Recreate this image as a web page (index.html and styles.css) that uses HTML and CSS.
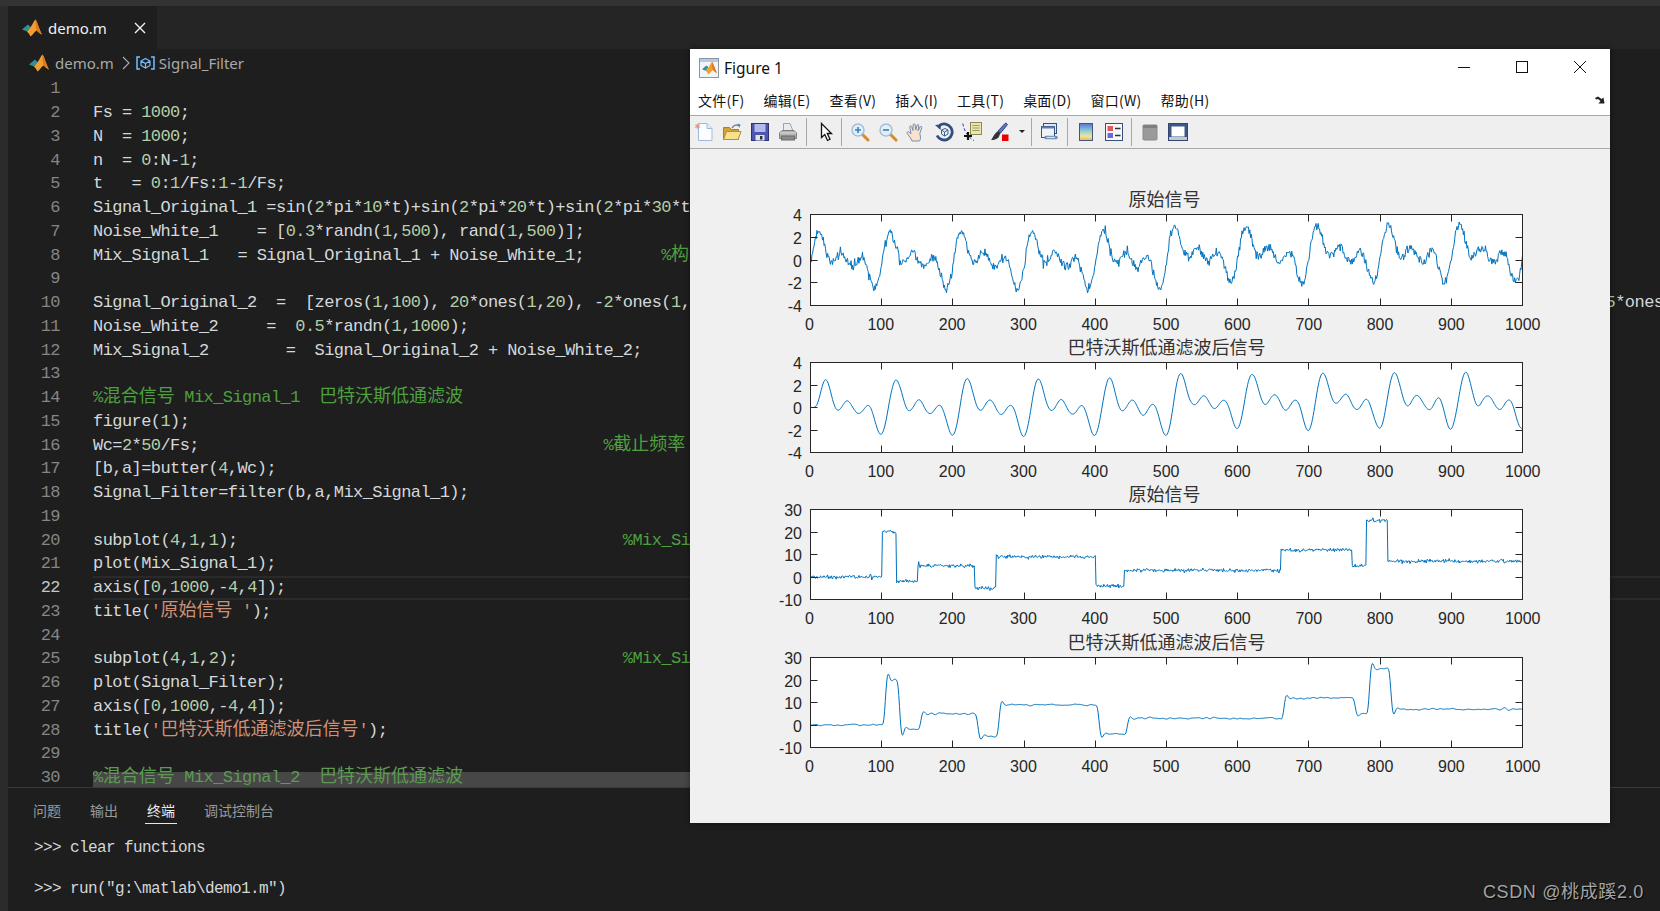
FILE: index.html
```html
<!DOCTYPE html>
<html lang="zh">
<head>
<meta charset="utf-8">
<title>demo.m</title>
<link rel="stylesheet" href="styles.css">
</head>
<body>
<svg class="defs" width="0" height="0">
  <symbol id="mlogo" viewBox="0 0 20 18">
    <path d="M0 10.5 6 5.5 8.5 8 5 12.5z" fill="#2f8f9a"/>
    <path d="M5 12.5 9 7.5C10.5 5.5 12 1.5 13.5 0.5 15 2 17.5 11 20 15.5 18 15 16 12.5 14.5 11.5 12.5 13 10.5 16 8.5 17.5 7.5 15.5 6.5 14 5 12.5z" fill="#f0a030"/>
    <path d="M13.5 .5C15 2 17.5 11 20 15.5 18 15 16 12.5 14.5 11.5 13.5 8 13.5 4 13.5 .5z" fill="#e07a1f"/>
  </symbol>
</svg>
<div class="app">
  <header class="tabbar">
    <div class="tab">
      <svg class="tab-logo" width="20" height="18"><use href="#mlogo"/></svg>
      <span class="tab-name">demo.m</span>
      <svg class="tab-close" width="12" height="12" viewBox="0 0 12 12"><path d="M1 1 11 11M11 1 1 11" stroke="#f2f2f2" stroke-width="1.4" fill="none"/></svg>
    </div>
  </header>
  <nav class="crumbs">
    <svg width="20" height="18"><use href="#mlogo"/></svg>
    <span class="crumb-file">demo.m</span>
    <svg class="crumb-chev" width="8" height="14" viewBox="0 0 8 14"><path d="M1 1 7 7 1 13" stroke="#b0b0b0" stroke-width="1.1" fill="none"/></svg>
    <svg class="crumb-sym" width="19" height="14" viewBox="0 0 19 14"><path d="M4 1H1V13H4M15 1H18V13H15" stroke="#75beff" stroke-width="1.5" fill="none"/><path d="M9.500 2.500 14 5V9.500L9.500 12 5 9.500V5zM5 5 9.500 7.500 14 5M9.500 7.500V12" stroke="#75beff" stroke-width="1.200" fill="none"/></svg>
    <span class="crumb-sig">Signal_Filter</span>
  </nav>
  <main class="editor">
    <div class="line"><span class="ln">1</span><code></code></div>
    <div class="line"><span class="ln">2</span><code>Fs = <i class="n">1000</i>;</code></div>
    <div class="line"><span class="ln">3</span><code>N  = <i class="n">1000</i>;</code></div>
    <div class="line"><span class="ln">4</span><code>n  = <i class="n">0</i>:N-<i class="n">1</i>;</code></div>
    <div class="line"><span class="ln">5</span><code>t   = <i class="n">0</i>:<i class="n">1</i>/Fs:<i class="n">1</i>-<i class="n">1</i>/Fs;</code></div>
    <div class="line"><span class="ln">6</span><code>Signal_Original_1 =sin(<i class="n">2</i>*pi*<i class="n">10</i>*t)+sin(<i class="n">2</i>*pi*<i class="n">20</i>*t)+sin(<i class="n">2</i>*pi*<i class="n">30</i>*t);</code></div>
    <div class="line"><span class="ln">7</span><code>Noise_White_1    = [<i class="n">0.3</i>*randn(<i class="n">1</i>,<i class="n">500</i>), rand(<i class="n">1</i>,<i class="n">500</i>)];</code></div>
    <div class="line"><span class="ln">8</span><code>Mix_Signal_1   = Signal_Original_1 + Noise_White_1;        <i class="c">%<b>构建混合信号</b></i></code></div>
    <div class="line"><span class="ln">9</span><code></code></div>
    <div class="line"><span class="ln">10</span><code>Signal_Original_2  =  [zeros(<i class="n">1</i>,<i class="n">100</i>), <i class="n">20</i>*ones(<i class="n">1</i>,<i class="n">20</i>), -<i class="n">2</i>*ones(<i class="n">1</i>,<i class="n">30</i>), <i class="n">5</i>*ones(<i class="n">1</i>,<i class="n">80</i>), -<i class="n">5</i>*ones(<i class="n">1</i>,<i class="n">30</i>), <i class="n">9</i>*ones(<i class="n">1</i>,<i class="n">140</i>), -<i class="n">4</i>*ones(<i class="n">1</i>,<i class="n">40</i>), <i class="n">3</i>*ones(<i class="n">1</i>,<i class="n">220</i>), <i class="n">12</i>*ones(<i class="n">1</i>,<i class="n">100</i>), <i class="n">5</i>*ones(<i class="n">1</i>,<i class="n">20</i>), <i class="n">25</i>*ones(<i class="n">1</i>,<i class="n">30</i>), <i class="n">7</i>*ones(<i class="n">1</i>,<i class="n">190</i>)];</code></div>
    <div class="line"><span class="ln">11</span><code>Noise_White_2     =  <i class="n">0.5</i>*randn(<i class="n">1</i>,<i class="n">1000</i>);</code></div>
    <div class="line"><span class="ln">12</span><code>Mix_Signal_2        =  Signal_Original_2 + Noise_White_2;</code></div>
    <div class="line"><span class="ln">13</span><code></code></div>
    <div class="line"><span class="ln">14</span><code><i class="c">%<b>混合信号</b> Mix_Signal_1  <b>巴特沃斯低通滤波</b></i></code></div>
    <div class="line"><span class="ln">15</span><code>figure(<i class="n">1</i>);</code></div>
    <div class="line"><span class="ln">16</span><code>Wc=<i class="n">2</i>*<i class="n">50</i>/Fs;                                          <i class="c">%<b>截止频率</b></i></code></div>
    <div class="line"><span class="ln">17</span><code>[b,a]=butter(<i class="n">4</i>,Wc);</code></div>
    <div class="line"><span class="ln">18</span><code>Signal_Filter=filter(b,a,Mix_Signal_1);</code></div>
    <div class="line"><span class="ln">19</span><code></code></div>
    <div class="line"><span class="ln">20</span><code>subplot(<i class="n">4</i>,<i class="n">1</i>,<i class="n">1</i>);                                        <i class="c">%Mix_Signal_1</i></code></div>
    <div class="line"><span class="ln">21</span><code>plot(Mix_Signal_1);</code></div>
    <div class="line current"><span class="ln">22</span><code>axis([<i class="n">0</i>,<i class="n">1000</i>,-<i class="n">4</i>,<i class="n">4</i>]);</code></div>
    <div class="line"><span class="ln">23</span><code>title(<i class="s">'<b>原始信号</b> '</i>);</code></div>
    <div class="line"><span class="ln">24</span><code></code></div>
    <div class="line"><span class="ln">25</span><code>subplot(<i class="n">4</i>,<i class="n">1</i>,<i class="n">2</i>);                                        <i class="c">%Mix_Signal_1</i></code></div>
    <div class="line"><span class="ln">26</span><code>plot(Signal_Filter);</code></div>
    <div class="line"><span class="ln">27</span><code>axis([<i class="n">0</i>,<i class="n">1000</i>,-<i class="n">4</i>,<i class="n">4</i>]);</code></div>
    <div class="line"><span class="ln">28</span><code>title(<i class="s">'<b>巴特沃斯低通滤波后信号</b>'</i>);</code></div>
    <div class="line"><span class="ln">29</span><code></code></div>
    <div class="line selected"><span class="ln">30</span><code><i class="c dim">%<b>混合信号</b> Mix_Signal_2  <b>巴特沃斯低通滤波</b></i></code></div>
  </main>
  <section class="panel">
    <div class="panel-tabs">
      <span class="ptab">问题</span>
      <span class="ptab">输出</span>
      <span class="ptab active">终端</span>
      <span class="ptab">调试控制台</span>
    </div>
    <div class="term">
      <div class="term-line">&gt;&gt;&gt; clear functions</div>
      <div class="term-line">&gt;&gt;&gt; run("g:\matlab\demo1.m")</div>
    </div>
  </section>
</div>

<div class="figure">
  <div class="titlebar">
    <span class="fig-icon"><svg width="15" height="14"><use href="#mlogo"/></svg></span>
    <span class="fig-title">Figure 1</span>
    <div class="win-btns">
      <span class="win-btn"><svg width="14" height="14" viewBox="0 0 14 14"><path d="M1 7.500H13" stroke="#111" fill="none"/></svg></span>
      <span class="win-btn"><svg width="14" height="14" viewBox="0 0 14 14"><rect x="1.500" y="1.500" width="11" height="11" stroke="#111" fill="none"/></svg></span>
      <span class="win-btn"><svg width="14" height="14" viewBox="0 0 14 14"><path d="M1 1 13 13M13 1 1 13" stroke="#111" fill="none"/></svg></span>
    </div>
  </div>
  <div class="menubar">
    <span>文件(F)</span><span>编辑(E)</span><span>查看(V)</span><span>插入(I)</span><span>工具(T)</span><span>桌面(D)</span><span>窗口(W)</span><span>帮助(H)</span>
    <svg class="menu-arrow" width="10" height="8" viewBox="0 0 10 8"><path d="M0 2 3 .5 6.500 3 8.500 1.500 9.500 7.500 3.500 7.500 5.500 5 3 3 1 3.500z" fill="#222"/></svg>
  </div>
  <div class="toolbar">
    <span class="tbtn"><svg viewBox="0 0 20 20"><path d="M4.500 1.500H13L18 6.500V18.500H4.500z" fill="#fbfdff" stroke="#9fbbdc"/><path d="M13 1.500V6.500H18" fill="#e2ebf6" stroke="#9fbbdc"/><path d="M3.500 1 4.300 3 6.500 2.500 5 4.200 6.500 6 4.300 5.500 3.500 7.500 2.700 5.500.5 6 2 4.200.5 2.500 2.700 3z" fill="#ef9a6a"/></svg></span>
    <span class="tbtn"><svg viewBox="0 0 20 20"><path d="M1.500 5.500H7.500L9.500 7.500H16.500V17.500H1.500z" fill="#d2a236" stroke="#a67f27"/><path d="M1.500 17.500 4.500 9.500H19L16 17.500z" fill="#f7e08e" stroke="#b58f34"/><path d="M10 6C11.500 3 15 2 17 4" stroke="#6684a8" stroke-width="1.500" fill="none"/><path d="M15.500 1.500 18.500 2.500 17.500 6z" fill="#6684a8"/></svg></span>
    <span class="tbtn"><svg viewBox="0 0 20 20"><rect x="1.500" y="1.500" width="17" height="17" fill="#4b58ac" stroke="#2b3278"/><rect x="4.500" y="2" width="11" height="8" fill="#b5baee"/><rect x="5.500" y="13" width="9" height="5.500" fill="#e3e3ee"/><rect x="10" y="14" width="2.500" height="3.500" fill="#333"/></svg></span>
    <span class="tbtn"><svg viewBox="0 0 20 20"><path d="M5.500 1.500H12L15 9H5.500z" fill="#e6edf2" stroke="#9aa4ac"/><path d="M1.500 11 4 8.500H16L18.500 11V16.500H1.500z" fill="#b3b3b3" stroke="#7d7d7d"/><path d="M2 11H18" stroke="#dcdcdc"/><rect x="3.500" y="14" width="13" height="4" fill="#8a8a8a" stroke="#6c6c6c"/></svg></span>
    <i class="sep"></i>
    <span class="tbtn"><svg viewBox="0 0 20 20"><path d="M5.500 1.500V15.500L8.800 12.500 11.500 18.500 14 17.300 11.300 11.500H15.500z" fill="#fff" stroke="#111" stroke-width="1.300"/></svg></span>
    <i class="sep sep-tight"></i>
    <span class="tbtn"><svg viewBox="0 0 20 20"><path d="M12 12 18 18" stroke="#d98b2b" stroke-width="3" stroke-linecap="round"/><circle cx="8" cy="8" r="6" fill="#dff0fb" stroke="#a7bed3" stroke-width="1.500"/><path d="M5 8H11M8 5V11" stroke="#3b7fc0" stroke-width="1.600"/></svg></span>
    <span class="tbtn"><svg viewBox="0 0 20 20"><path d="M12 12 18 18" stroke="#d98b2b" stroke-width="3" stroke-linecap="round"/><circle cx="8" cy="8" r="6" fill="#dff0fb" stroke="#a7bed3" stroke-width="1.500"/><path d="M5 8H11" stroke="#3b7fc0" stroke-width="1.600"/></svg></span>
    <span class="tbtn"><svg viewBox="0 0 20 20"><path d="M6 19C5 16 2.500 13.500 1.200 11.500 .5 10 2 9.200 3 10L5 11.800 3.800 5C3.600 3.800 5.200 3.300 5.700 4.500L7 8.500 7.200 2.800C7.300 1.500 9 1.500 9.200 2.800L9.800 8 11 3.300C11.300 2 13 2.300 12.800 3.700L12 8.800 14.200 4.800C14.800 3.800 16.300 4.500 15.800 5.700L13.800 11.500 14.500 15C14.700 17 14 18 13.500 19z" fill="#f8e3cf" stroke="#7b8db0"/></svg></span>
    <span class="tbtn"><svg viewBox="0 0 20 20"><path d="M5.500 3.500A8 8 0 1 1 3 13.500" stroke="#2f4f7f" stroke-width="2.800" fill="none"/><path d="M1 3 7 2.500 6.500 8z" fill="#2f4f7f"/><path d="M7.500 8 11 6.500 14 8V12L10.500 14 7.500 12zM7.500 8 10.500 10 14 8M10.500 10V14" fill="#e9f0f7" stroke="#3c5f90"/></svg></span>
    <span class="tbtn"><svg viewBox="0 0 20 20"><rect x="8.500" y=".5" width="11" height="12" fill="#e8e6a8" stroke="#8b8b5a"/><path d="M10.500 3.500H17.500M10.500 6H17.500M10.500 8.500H17.500" stroke="#9b9b66"/><path d="M.8 1.500C2 8 5 14.500 12 18.500" stroke="#3a3ad0" stroke-dasharray="3 2" fill="none"/><path d="M6 10V18M2 14H10" stroke="#111" stroke-width="2.200"/></svg></span>
    <span class="tbtn"><svg viewBox="0 0 20 20"><path d="M8 9 15 1.500C16 .5 18 2 17 3.200L10.500 11z" fill="#5f77c4" stroke="#2f3f80"/><path d="M8 9 10.500 11 8.500 15.500C6 17.500 3 18.200 1 18 3 16 3.500 12 8 9z" fill="#333"/><rect x="12" y="12.500" width="6.500" height="6.500" fill="#e60000"/></svg></span>
    <span class="tcaret"></span>
    <i class="sep sep-tight"></i>
    <span class="tbtn"><svg viewBox="0 0 20 20"><rect x="3.500" y="1.500" width="13" height="10" fill="#dfe8f4" stroke="#35527f"/><rect x="1.500" y="4.500" width="13" height="11" fill="#eef3f9" stroke="#35527f"/><rect x="1.500" y="4.500" width="13" height="2" fill="#5f7fb0"/><path d="M6 15.500H10M11 15.500H16" stroke="#6c8ab0" stroke-width="3.500" stroke-linecap="round" fill="none"/><path d="M6.500 15.500H15" stroke="#d6e2ef" stroke-width="1.300" fill="none"/></svg></span>
    <i class="sep sep-mid"></i>
    <span class="tbtn"><svg viewBox="0 0 20 20"><defs><linearGradient id="cbar" x1="0" y1="0" x2="0" y2="1"><stop offset="0" stop-color="#5a74d0"/><stop offset=".45" stop-color="#8fd0d8"/><stop offset=".75" stop-color="#eee69a"/><stop offset="1" stop-color="#f0b060"/></linearGradient></defs><rect x="3.500" y="1.500" width="13" height="17" fill="url(#cbar)" stroke="#46557a"/></svg></span>
    <span class="tbtn"><svg viewBox="0 0 20 20"><rect x="1.500" y="1.500" width="17" height="17" fill="#f5f7fa" stroke="#3a4f7a"/><rect x="3.500" y="4" width="5.500" height="5" fill="#e05a5a"/><rect x="3.500" y="11" width="5.500" height="5" fill="#6a6ae0"/><path d="M11 6.500H16.500M11 13.500H16.500" stroke="#333" stroke-width="1.500"/></svg></span>
    <i class="sep sep-mid"></i>
    <span class="tbtn"><svg viewBox="0 0 20 20"><rect x="3" y="3" width="14" height="15" rx="1" fill="#9a9a9a" stroke="#8a8a8a"/><rect x="3" y="3" width="14" height="3" fill="#7f7f7f"/></svg></span>
    <span class="tbtn"><svg viewBox="0 0 20 20"><rect x=".5" y="1.500" width="19" height="17" fill="#3f5788" stroke="#33466f"/><rect x="3.500" y="4.500" width="13" height="10" fill="#fff"/><rect x="1" y="15" width="18" height="3" fill="#c2c8d0"/></svg></span>
  </div>
  <div class="canvas">
    <svg id="plots" class="plots" width="920" height="674" viewBox="0 0 920 674"></svg>
  </div>
</div>

<div class="watermark">CSDN @桃成蹊2.0</div>
<script src="script.js"></script>
</body>
</html>
```

FILE: styles.css
```css
* { box-sizing: border-box; }
html, body { margin: 0; padding: 0; height: 100%; overflow: hidden; }
body { background: #2f2f2f; width: 1660px; height: 911px; position: relative; }
.defs { position: absolute; }
.app {
  height: 911px;
  padding: 6px 0 0 8px;
  display: flex;
  flex-direction: column;
  background: linear-gradient(#333 0 6px, #2b2b2b 6px);
}
.tabbar { height: 43px; background: #252526; display: flex; flex: none; }
.tab {
  width: 149px;
  background: #1e1e1e;
  display: flex;
  align-items: center;
  padding-left: 14px;
  color: #f0f0f0;
  font: 15px "Noto Sans", "Open Sans", sans-serif;
}
.tab-name { margin-left: 6px; }
.tab-close { margin-left: 27px; }
.crumbs {
  height: 27.75px;
  flex: none;
  background: #1e1e1e;
  display: flex;
  align-items: center;
  padding-left: 21px;
  color: #a9a9a9;
  font: 15px "Noto Sans", "Open Sans", sans-serif;
}
.crumb-file { margin-left: 6px; }
.crumb-chev { margin-left: 8px; }
.crumb-sym { margin-left: 6px; }
.crumb-sig { margin-left: 4px; }
.editor {
  flex: 1;
  min-height: 0;
  overflow: hidden;
  padding-top: .5px;
  background: #1e1e1e;
  font: 17px/23.75px "Liberation Mono", monospace;
  letter-spacing: -0.57px;
  color: #d4d8da;
}
.line { display: flex; height: 23.75px; }
.ln { width: 52px; flex: none; text-align: right; color: #858585; }
.current .ln { color: #c6c6c6; }
.line code {
  flex: 1;
  min-width: 0;
  margin-left: 33px;
  font: inherit;
  white-space: pre;
}
.current code { box-shadow: inset 0 2px #2a2a2a, inset 0 -2px #2a2a2a; }
.selected code {
  background: linear-gradient(transparent 6.500px, #474747 6.500px) no-repeat;
  background-size: 620px 100%;
}
.line i { font-style: normal; }
.line b {
  font-family: "Noto Sans CJK SC", sans-serif;
  font-weight: 400;
  font-size: 18px;
  line-height: 0;
  letter-spacing: 0;
}
.n { color: #b5cea8; }
.c { color: #4ea03e; }
.c.dim { color: #5d9a52; }
.s { color: #ce9178; }
.panel {
  flex: none;
  height: 124px;
  background: #1e1e1e;
  border-top: 1px solid #3a3a3a;
  padding: 12px 0 0 25px;
}
.panel-tabs {
  display: flex;
  gap: 29px;
  font: 14px/20px "Noto Sans CJK SC", sans-serif;
  color: #9a9a9a;
}
.ptab { padding-bottom: 3px; border-bottom: 1px solid transparent; }
.ptab.active { color: #ececec; border-bottom-color: #e7e7e7; margin: 0 -2px; padding: 0 2px 3px; }
.term {
  padding: 13px 0 0 1px;
  display: flex;
  flex-direction: column;
  gap: 19px;
  font: 16px/22px "Liberation Mono", monospace;
  letter-spacing: -0.6px;
  color: #d4d8da;
  white-space: pre;
}
.figure {
  position: absolute;
  left: 690px;
  top: 49px;
  width: 920px;
  height: 774px;
  display: flex;
  flex-direction: column;
  background: #f0f0f0;
  box-shadow: 0 0 6px rgba(0, 0, 0, .45);
}
.titlebar {
  height: 38px;
  flex: none;
  background: #fff;
  display: flex;
  align-items: center;
  padding-left: 9px;
}
.fig-icon {
  width: 20px;
  height: 20px;
  display: flex;
  align-items: center;
  justify-content: center;
  border: 1px solid #8a97a8;
  background: linear-gradient(#b9c8dc 0 3px, #f1f4f8 3px);
}
.fig-title {
  margin-left: 5px;
  font: 15.500px "Noto Sans", "Open Sans", sans-serif;
  color: #111;
}
.win-btns { margin-left: auto; display: flex; padding-right: 1px; }
.win-btn { width: 58px; height: 34px; display: flex; align-items: center; justify-content: center; margin-bottom: 2px; }
.menubar {
  height: 29px;
  flex: none;
  background: #fff;
  border-bottom: 1px solid #a8a8a8;
  display: flex;
  align-items: center;
  gap: 19px;
  padding: 0 5px 3px 8px;
  font: 14px "Noto Sans CJK SC", sans-serif;
  letter-spacing: .25px;
  color: #111;
}
.menu-arrow { margin-left: auto; }
.toolbar {
  height: 33px;
  flex: none;
  background: #efefef;
  border-bottom: 1px solid #a8a8a8;
  display: flex;
  align-items: center;
}
.tbtn { width: 28px; height: 24px; display: flex; align-items: center; justify-content: center; }
.tbtn svg { width: 20px; height: 20px; display: block; }
.sep { width: 1px; height: 28px; background: #a8a8a8; margin: 0 5px 0 4px; }
.sep-tight { margin: 0 4px 0 1px; }
.sep-mid { margin: 0 4px 0 3px; }
.tcaret { width: 16px; height: 4px; position: relative; }
.tcaret::after {
  content: "";
  position: absolute;
  left: 5px;
  top: 0;
  border: 3px solid transparent;
  border-top: 3px solid #222;
}
.canvas { flex: 1; min-height: 0; background: #f0f0f0; }
.plots { display: block; }
.axis-box { fill: #fff; stroke: #262626; stroke-width: 1; }
.tick { stroke: #262626; stroke-width: 1; fill: none; }
.trace { stroke: #0072bd; stroke-width: 1; fill: none; stroke-linejoin: round; }
.tick-label { font: 16px "Liberation Sans", sans-serif; fill: #262626; }
.plot-title { font: 18px "Noto Sans CJK SC", sans-serif; fill: #333; text-anchor: middle; }
.watermark {
  position: absolute;
  right: 16px;
  top: 880px;
  font: 18px/24px "Liberation Sans", "Noto Sans CJK SC", sans-serif;
  letter-spacing: .65px;
  color: #a4a4a4;
  text-shadow: 1px 1px 1px #000;
}
```

FILE: script.js
```js
(function () {
  var NS = 'http://www.w3.org/2000/svg';
  var svg = document.getElementById('plots');

  // Deterministic random source so the picture is stable.
  var state = 20230611;
  function rand() {
    state = (state + 0x6d2b79f5) | 0;
    var t = Math.imul(state ^ (state >>> 15), 1 | state);
    t = (t + Math.imul(t ^ (t >>> 7), 61 | t)) ^ t;
    return ((t ^ (t >>> 14)) >>> 0) / 4294967296;
  }
  function randn() {
    return Math.sqrt(-2 * Math.log(1 - rand())) * Math.cos(2 * Math.PI * rand());
  }

  // Butterworth low-pass filters: butter(4, 0.1) and butter(4, 0.2)
  var low1 = {
    b: [4.166e-4, 1.6664e-3, 2.4996e-3, 1.6664e-3, 4.166e-4],
    a: [1, -3.1806, 3.8612, -2.1122, 0.4383]
  };
  var low2 = {
    b: [0.0048, 0.0193, 0.0289, 0.0193, 0.0048],
    a: [1, -2.3695, 2.314, -1.0547, 0.1874]
  };
  function filter(f, x) {
    var y = [];
    for (var i = 0; i < x.length; i++) {
      var v = 0;
      for (var j = 0; j < 5; j++) {
        if (i - j >= 0) v += f.b[j] * x[i - j];
        if (j > 0 && i - j >= 0) v -= f.a[j] * y[i - j];
      }
      y.push(v);
    }
    return y;
  }

  var mix1 = [];
  for (var i = 0; i < 1000; i++) {
    var t = i / 1000;
    var s = Math.sin(2 * Math.PI * 10 * t) + Math.sin(2 * Math.PI * 20 * t) + Math.sin(2 * Math.PI * 30 * t);
    mix1.push(s + (i < 500 ? 0.2 * randn() : 0.1 + 0.8 * rand()));
  }
  var steps = [[0, 100], [20, 20], [-2, 30], [5, 80], [-5, 30], [9, 140], [-4, 40], [3, 220], [12, 100], [5, 20], [25, 30], [7, 190]];
  var mix2 = [];
  steps.forEach(function (st) {
    for (var k = 0; k < st[1]; k++) mix2.push(st[0] + 0.4 * randn());
  });

  function el(name, attrs, text) {
    var e = document.createElementNS(NS, name);
    for (var key in attrs) e.setAttribute(key, attrs[key]);
    if (text !== undefined) e.textContent = text;
    svg.appendChild(e);
    return e;
  }

  var L = 120.5, R = 832.5, W = R - L;
  function axes(top, h, title, titleX, ymax, ystep, data) {
    var ymin = ymax - 4 * ystep;
    var bottom = top + h;
    el('text', { 'class': 'plot-title', x: titleX, y: top - 9 }, title);
    el('rect', { 'class': 'axis-box', x: L, y: top, width: W, height: h });
    var pts = data.map(function (v, idx) {
      var yy = top + (ymax - v) / (ymax - ymin) * h;
      return (L + (idx + 1) / 1000 * W).toFixed(2) + ',' + yy.toFixed(2);
    }).join(' ');
    el('polyline', { 'class': 'trace', points: pts });
    el('rect', { 'class': 'tick', x: L, y: top, width: W, height: h });
    for (var i = 0; i <= 10; i++) {
      var x = Math.round(L + i * W / 10 - 0.5) + 0.5;
      if (i > 0 && i < 10) {
        el('path', { 'class': 'tick', d: 'M' + x + ' ' + bottom + 'v-7M' + x + ' ' + top + 'v7' });
      }
      el('text', { 'class': 'tick-label', x: L + i * W / 10 - 1 + i * 0.12, y: bottom + 24.5, 'text-anchor': 'middle' }, String(i * 100));
    }
    for (var j = 0; j <= 4; j++) {
      var y = Math.round(top + j * h / 4 - 0.5) + 0.5;
      if (j > 0 && j < 4) {
        el('path', { 'class': 'tick', d: 'M' + L + ' ' + y + 'h7M' + R + ' ' + y + 'h-7' });
      }
      el('text', { 'class': 'tick-label', x: 112, y: y + 6, 'text-anchor': 'end' }, String(ymax - j * ystep));
    }
  }

  axes(65.5, 91, '原始信号', 474.5, 4, 2, mix1);
  axes(213.5, 90, '巴特沃斯低通滤波后信号', 476.5, 4, 2, filter(low1, mix1));
  axes(360.5, 90, '原始信号', 474.5, 30, 10, mix2);
  axes(508.5, 90, '巴特沃斯低通滤波后信号', 476.5, 30, 10, filter(low2, mix2));
})();
```
